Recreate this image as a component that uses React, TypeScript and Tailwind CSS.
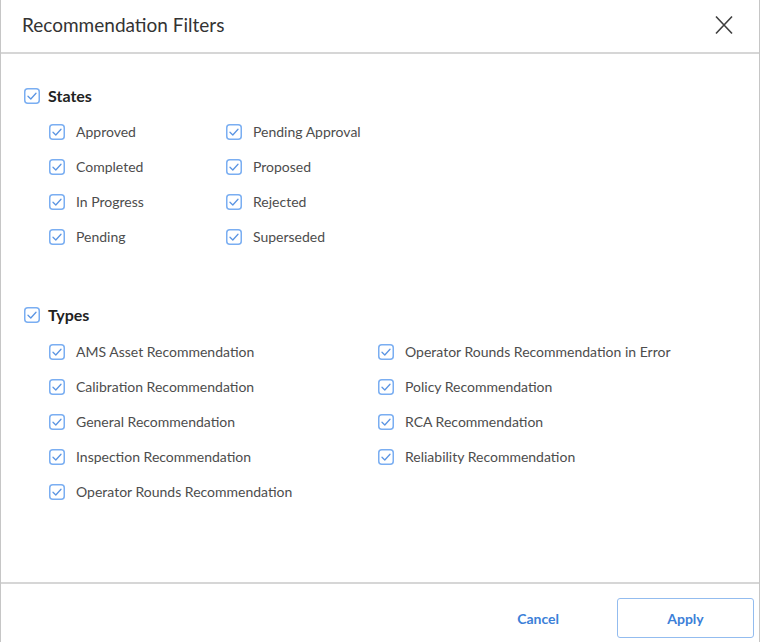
import React from "react";

const states = [
  ["Approved", "Completed", "In Progress", "Pending"],
  ["Pending Approval", "Proposed", "Rejected", "Superseded"],
];

const types = [
  [
    "AMS Asset Recommendation",
    "Calibration Recommendation",
    "General Recommendation",
    "Inspection Recommendation",
    "Operator Rounds Recommendation",
  ],
  [
    "Operator Rounds Recommendation in Error",
    "Policy Recommendation",
    "RCA Recommendation",
    "Reliability Recommendation",
  ],
];

function Check() {
  return (
    <svg width="16" height="16" viewBox="0 0 16 16" className="shrink-0">
      <rect x="0.75" y="0.75" width="14.5" height="14.5" rx="3" fill="white" stroke="#7aaef2" strokeWidth="1.5" />
      <path d="M4 8.3 L6.8 11 L12 5.3" fill="none" stroke="#5b95e3" strokeWidth="1.3" strokeLinecap="round" strokeLinejoin="round" />
    </svg>
  );
}

function Section({
  title,
  columns,
  colWidth,
  listGap,
}: {
  title: string;
  columns: string[][];
  colWidth: string;
  listGap: string;
}) {
  return (
    <div>
      <div className="flex h-[20px] items-center gap-[8px] pl-[23px]">
        <Check />
        <span className="text-[16px] font-bold text-[#222]">{title}</span>
      </div>
      <div className={`flex pl-[48px] ${listGap}`}>
        {columns.map((col, i) => (
          <div key={i} className={i === 0 ? colWidth : ""}>
            {col.map((label) => (
              <div key={label} className="flex h-[35px] items-center gap-[11px]">
                <Check />
                <span className="text-[14px] text-[#4d4d4d]">{label}</span>
              </div>
            ))}
          </div>
        ))}
      </div>
    </div>
  );
}

export default function App() {
  return (
    <div className="h-[642px] w-[761px] bg-white" style={{ fontFamily: "Lato, 'Noto Sans', sans-serif" }}>
      <div className="flex h-[642px] w-[760px] flex-col border-x border-[#c6c6c6]">
        <div className="flex h-[54px] shrink-0 items-center justify-between border-b-2 border-[#d6d6d6] pl-[21px] pr-[25px]">
          <span className="pb-[2px] text-[19px] text-[#333]">Recommendation Filters</span>
          <svg width="20" height="20" viewBox="0 0 20 20" className="mb-[3px]">
            <path d="M2 1.5 L18 18.5 M18 1.5 L2 18.5" stroke="#3f3f3f" strokeWidth="1.6" fill="none" />
          </svg>
        </div>
        <div className="flex-1 pt-[32px]">
          <Section title="States" columns={states} colWidth="w-[177px]" listGap="mt-[8px]" />
          <div className="h-[51px]" />
          <Section title="Types" columns={types} colWidth="w-[329px]" listGap="mt-[9px]" />
        </div>
        <div className="flex h-[60px] shrink-0 items-start justify-end border-t-2 border-[#d6d6d6] pr-[5px] pt-[14px]">
          <button className="mr-[58px] mt-[10px] text-[14px] font-bold text-[#3c80d8]">Cancel</button>
          <button className="h-[40px] w-[137px] rounded-[3px] border-[1.5px] border-[#93bcef] text-[14px] font-bold text-[#3c80d8]">
            Apply
          </button>
        </div>
      </div>
    </div>
  );
}
